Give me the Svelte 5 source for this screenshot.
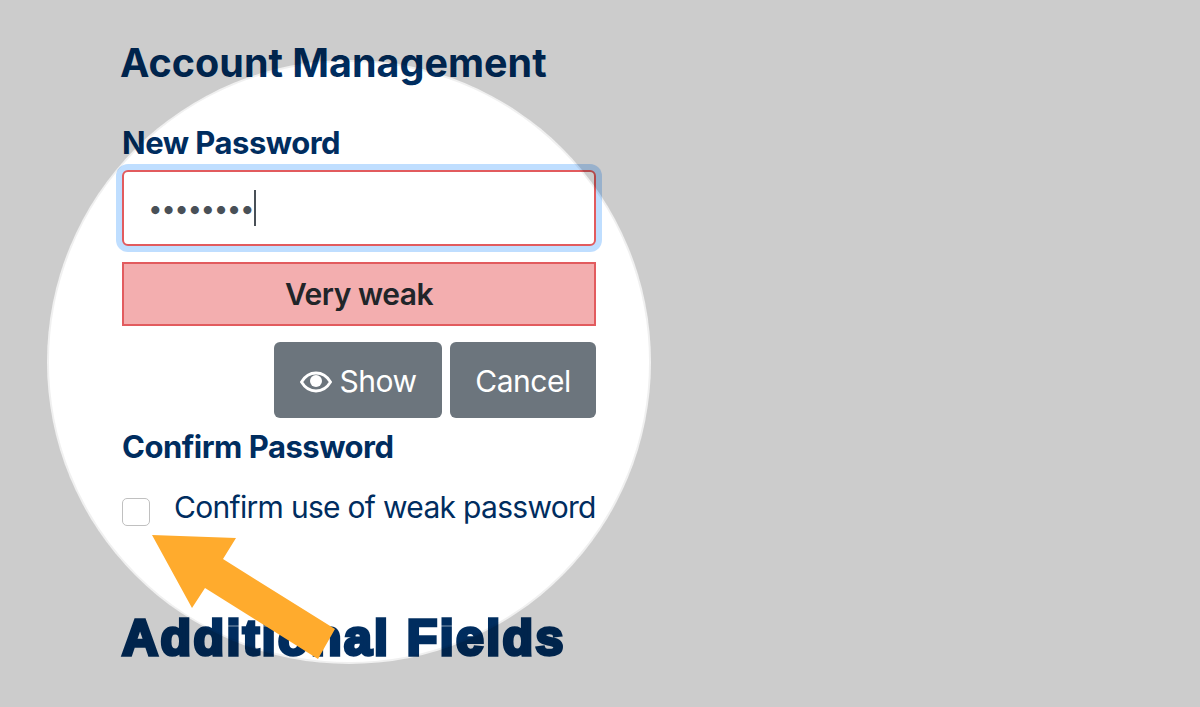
<script lang="ts">
	let password = $state('12345678');
	let confirmed = $state(false);
</script>

<main class="page">
	<section class="form">
		<h2 class="title">Account Management</h2>

		<label class="label" for="new-password">New Password</label>
		<div class="field">
			<input id="new-password" class="input" type="password" bind:value={password} />
			<span class="caret"></span>
		</div>

		<div class="meter">Very weak</div>

		<div class="actions">
			<button class="btn show" type="button">
				<svg class="eye" viewBox="0 0 32 22" aria-hidden="true">
					<path
						d="M16 2C9.500 2 4.500 6 1.500 11c3 5 8 9 14.500 9s11.500-4 14.500-9C27.500 6 22.500 2 16 2z"
						fill="none"
						stroke="currentColor"
						stroke-width="2.800"
					/>
					<circle cx="16" cy="10" r="6" fill="currentColor" />
				</svg>
				Show
			</button>
			<button class="btn cancel" type="button">Cancel</button>
		</div>

		<div class="label confirm">Confirm Password</div>
		<label class="check">
			<input class="box" type="checkbox" bind:checked={confirmed} />
			<span>Confirm use of weak password</span>
		</label>

		<h2 class="title heavy">Additional Fields</h2>
	</section>

	<div class="spotlight"><div class="hole"></div></div>

	<svg class="arrow" viewBox="0 0 1200 707" aria-hidden="true">
		<polygon points="152,535 236,538 223,559 335,629 318,659 205,588 192,608" fill="#ffab2d" />
	</svg>
</main>

<style>
	:global(body) {
		margin: 0;
		background: #fff;
	}

	.page {
		position: relative;
		width: 1200px;
		height: 707px;
		overflow: hidden;
		font-family: Inter, 'Liberation Sans', sans-serif;
		color: #002d5f;
	}

	.form {
		display: flex;
		flex-direction: column;
		width: 474px;
		padding: 41px 0 0 122px;
	}

	.title {
		margin: 0 0 0 -2px;
		font-size: 39.500px;
		line-height: 44px;
		font-weight: 700;
		white-space: nowrap;
	}

	.heavy {
		margin-top: 86px;
		margin-left: 0;
		font-family: 'Liberation Sans', sans-serif;
		font-size: 50px;
		line-height: 52px;
		font-weight: 700;
		letter-spacing: 2.400px;
		-webkit-text-stroke: 3.500px #002d5f;
	}

	.label {
		margin-top: 39px;
		font-size: 31px;
		line-height: 38px;
		font-weight: 700;
		letter-spacing: -0.500px;
		white-space: nowrap;
	}

	.field {
		position: relative;
		margin-top: 8px;
	}

	.input {
		display: block;
		box-sizing: border-box;
		width: 100%;
		height: 76px;
		padding: 0 24px;
		border: 2px solid #e25b5e;
		border-radius: 6px;
		outline: none;
		box-shadow: 0 0 0 6px rgba(0, 123, 255, 0.25);
		background: #fff;
		color: #495057;
		font-family: inherit;
		font-size: 26px;
		letter-spacing: -1.500px;
	}

	.caret {
		position: absolute;
		left: 132px;
		top: 20px;
		width: 2px;
		height: 36px;
		background: #495057;
	}

	.meter {
		box-sizing: border-box;
		height: 64px;
		margin-top: 16px;
		border: 2px solid #e25b5e;
		background: #f3aeaf;
		color: #212529;
		font-size: 30px;
		font-weight: 600;
		line-height: 60px;
		letter-spacing: -0.500px;
		text-align: center;
	}

	.actions {
		display: flex;
		justify-content: flex-end;
		gap: 8px;
		margin-top: 16px;
	}

	.btn {
		display: flex;
		align-items: center;
		justify-content: center;
		gap: 8px;
		height: 76px;
		padding: 1px 0 0;
		border: none;
		border-radius: 6px;
		background: #6c757d;
		color: #fff;
		font-family: inherit;
		font-size: 30px;
		letter-spacing: -0.500px;
	}

	.show {
		width: 168px;
	}

	.cancel {
		width: 146px;
	}

	.eye {
		width: 32px;
		height: 22px;
		margin-top: 3px;
	}

	.confirm {
		margin-top: 10px;
	}

	.check {
		display: flex;
		gap: 24px;
		margin-top: 22px;
		font-size: 30px;
		line-height: 38px;
		letter-spacing: -0.700px;
		white-space: nowrap;
	}

	.box {
		flex: none;
		width: 28px;
		height: 28px;
		margin: 10px 0 0;
		appearance: none;
		border: 1.500px solid #c0c0c0;
		border-radius: 5px;
		background: #fff;
	}

	.spotlight {
		position: absolute;
		inset: 0;
		pointer-events: none;
	}

	.hole {
		position: absolute;
		left: 47px;
		top: 60px;
		box-sizing: border-box;
		width: 604px;
		height: 604px;
		border: 2px solid rgba(0, 0, 0, 0.06);
		border-radius: 50%;
		box-shadow: 0 0 0 1300px rgba(0, 0, 0, 0.2);
	}

	.arrow {
		position: absolute;
		inset: 0;
		width: 100%;
		height: 100%;
		pointer-events: none;
	}
</style>
